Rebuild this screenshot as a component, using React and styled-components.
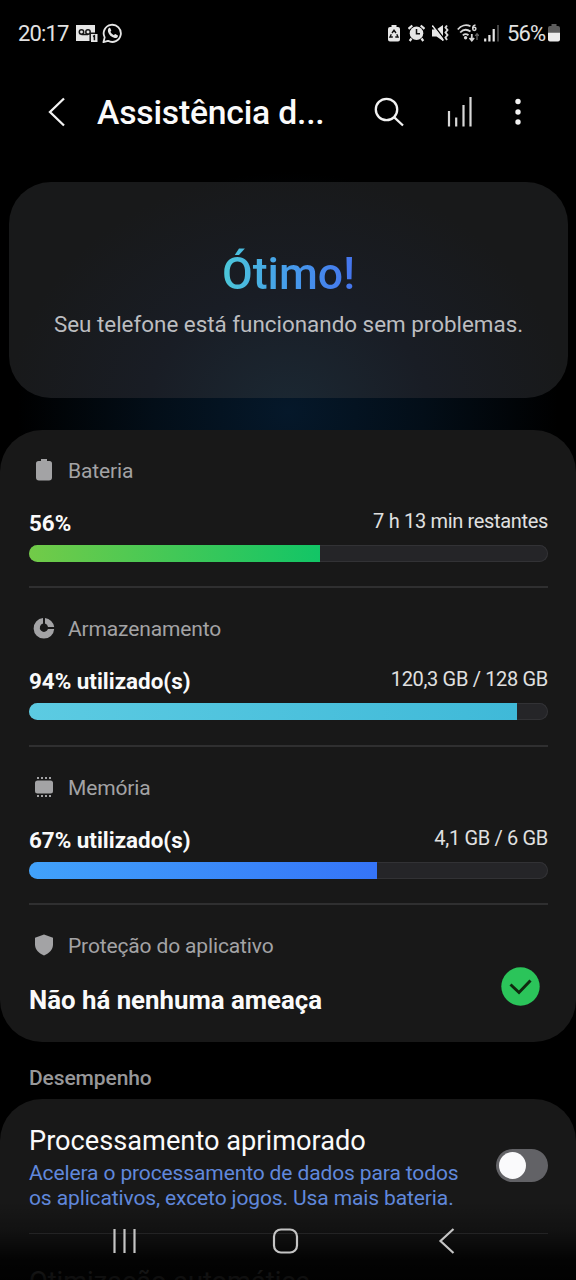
import styled, { createGlobalStyle } from "styled-components";

const GlobalStyle = createGlobalStyle`
  * {
    box-sizing: border-box;
    margin: 0;
    padding: 0;
  }

  html, body {
    background: #000;
    height: 1280px;
    overflow: hidden;
  }

  body {
    font-family: Roboto, "Liberation Sans", sans-serif;
    color: #fff;
  }
`;

const Screen = styled.main`
  position: relative;
  width: 576px;
  height: 1280px;
  overflow: hidden;
  background: radial-gradient(ellipse 270px 240px at 288px 412px, #05182a 0%, #030e18 50%, #000 100%) #000;
`;

const StatusBar = styled.header`
  display: flex;
  align-items: center;
  height: 66px;
  padding: 0 16px 0 18px;
`;

const Clock = styled.span`
  width: 58px;
  margin-top: 1px;
  font-size: 22px;
  line-height: 26px;
  letter-spacing: -0.85px;
  color: #e2e2e2;
  white-space: nowrap;
`;

const StatusIcon = styled.svg`
  flex: none;
  display: block;
  width: ${({ $w }) => $w}px;
  height: ${({ $h }) => $h || 22}px;
  margin-right: ${({ $gap }) => $gap || 0}px;
`;

const StatusRight = styled.div`
  display: flex;
  align-items: center;
  margin-left: auto;
`;

const Percent = styled.span`
  width: 41px;
  margin-top: 1px;
  font-size: 22px;
  line-height: 26px;
  letter-spacing: -0.9px;
  color: #e2e2e2;
  white-space: nowrap;
`;

const TitleBar = styled.nav`
  display: flex;
  align-items: center;
  height: 92px;
  padding: 0 31px 0 40px;
`;

const IconButton = styled.button`
  flex: none;
  display: flex;
  align-items: center;
  justify-content: center;
  width: ${({ $w }) => $w}px;
  height: 44px;
  border: 0;
  background: none;
  color: #f2f2f2;
`;

const Title = styled.h1`
  width: 263px;
  margin: 2px 0 0 23px;
  font-size: 33.7px;
  font-weight: 500;
  line-height: 44px;
  letter-spacing: -0.2px;
  color: #fafafa;
  white-space: nowrap;
`;

const Hero = styled.section`
  display: flex;
  flex-direction: column;
  align-items: center;
  width: 559px;
  height: 216px;
  margin: 24px 0 0 9px;
  padding-top: 64px;
  border-radius: 42px;
  background: radial-gradient(ellipse 280px 240px at 279px 230px, #1b2833 0%, #191d25 50%, #18191a 100%);
`;

const HeroTitle = styled.h2`
  font-size: 44.6px;
  font-weight: 500;
  line-height: 56px;
  background: linear-gradient(90deg, #4cc8d8 0%, #46a0ea 45%, #4574ee 100%);
  background-clip: text;
  color: transparent;
  white-space: nowrap;
`;

const HeroText = styled.p`
  margin-top: 8px;
  font-size: 22.4px;
  line-height: 29px;
  color: #bcbdc0;
  white-space: nowrap;
`;

const Panel = styled.section`
  height: ${({ $h }) => $h}px;
  margin-top: ${({ $gap }) => $gap}px;
  padding: 0 28px 0 29px;
  border-radius: 42px;
  background: #181818;
`;

const Section = styled.article`
  height: 158.4px;
  padding-top: 27px;
  border-bottom: ${({ $last }) => ($last ? "0" : "2px solid #2f2f30")};
`;

const SectionLabel = styled.h3`
  display: flex;
  align-items: center;
  height: 28px;
  font-size: 21px;
  font-weight: 400;
  letter-spacing: -0.14px;
  color: #a3a3a5;
  white-space: nowrap;

  svg {
    flex: none;
    width: 22px;
    height: 24px;
    margin: -2px 13px 0 4px;
  }
`;

const ValueRow = styled.div`
  display: flex;
  justify-content: space-between;
  height: 28px;
  margin: 24px 0 8px;
`;

const Value = styled.strong`
  font-size: 22.4px;
  font-weight: 700;
  line-height: 28px;
  color: #fafafa;
  white-space: nowrap;
`;

const Detail = styled.span`
  font-size: 20px;
  line-height: 24px;
  letter-spacing: -0.33px;
  color: #e0e0e0;
  white-space: nowrap;
`;

const Track = styled.div`
  height: 17px;
  border-radius: 9px;
  background: #252528;
  box-shadow: inset 0 0 0 1px #323235;
  overflow: hidden;
`;

const Fill = styled.div`
  height: 100%;
  background: linear-gradient(90deg, ${({ $from }) => $from}, ${({ $to }) => $to});
`;

const ThreatRow = styled.div`
  display: flex;
  justify-content: space-between;
  padding: 7px 8px 0 0;
`;

const Threat = styled.strong`
  margin-top: 17px;
  font-size: 25.8px;
  font-weight: 700;
  line-height: 32px;
  color: #fafafa;
  white-space: nowrap;
`;

const GroupTitle = styled.h3`
  height: 28px;
  margin: 22px 0 0 29px;
  font-size: 21px;
  font-weight: 500;
  line-height: 28px;
  letter-spacing: -0.1px;
  color: #979799;
`;

const Setting = styled.div`
  display: flex;
  align-items: flex-start;
  justify-content: space-between;
  height: 135px;
  padding-top: 26px;
  border-bottom: 1px solid #343436;
`;

const SettingTitle = styled.h4`
  font-size: 27.2px;
  font-weight: 400;
  line-height: 33px;
  color: #fafafa;
  white-space: nowrap;
`;

const SettingText = styled.p`
  margin-top: 3px;
  font-size: 21px;
  line-height: 25px;
  letter-spacing: -0.12px;
  color: #6088dc;
  white-space: nowrap;
`;

const Toggle = styled.span`
  flex: none;
  width: 52px;
  height: 33px;
  margin-top: 24px;
  padding: 3px;
  border-radius: 17px;
  background: #626266;

  &::before {
    content: "";
    display: block;
    width: 27px;
    height: 27px;
    border-radius: 50%;
    background: #fafafc;
  }
`;

const NextSetting = styled.h4`
  padding-top: 32px;
  font-size: 27.2px;
  font-weight: 400;
  line-height: 32px;
  color: #fafafa;
  white-space: nowrap;
`;

/* system navigation floats over the scrolled list */
const NavBar = styled.footer`
  position: absolute;
  left: 0;
  right: 0;
  bottom: 0;
  display: flex;
  align-items: center;
  gap: 133px;
  height: 78px;
  padding-left: 111px;
  background: linear-gradient(180deg, rgba(0, 0, 0, 0) 0%, rgba(0, 0, 0, 0.25) 35%, rgba(0, 0, 0, 0.88) 75%, rgba(0, 0, 0, 0.95) 100%);
`;

const VoicemailIcon = () => (
  <StatusIcon $w={22} $gap={4} viewBox="0 0 22 22">
    <path d="M0 3h19v9h2.500v8H15v-1H0z" fill="#e6e6e6" />
    <g fill="none" stroke="#161616" strokeWidth="1.500">
      <circle cx="5.500" cy="10" r="2.200" />
      <circle cx="12" cy="10" r="2.200" />
      <path d="M5.500 12.400H12M14.200 11v8M14 11.300h5" />
      <path d="M17 14.500l1.400-.7v4.500" />
    </g>
  </StatusIcon>
);

const WhatsappIcon = () => (
  <StatusIcon $w={21} viewBox="0 0 22 22">
    <path d="M1.500 20.600l1.300-5A9 9 0 1 1 6.300 19.200z" fill="none" stroke="#e6e6e6" strokeWidth="1.900" strokeLinejoin="round" />
    <path
      d="M7.200 5.800c.5-.5 1.200-.4 1.500.2l.9 2c.2.500 0 .8-.8 1.700.9 1.800 2 2.800 3.800 3.600.9-1.100 1.200-1.300 1.700-1l2 1c.5.300.5.700.3 1.300-.5 1.300-1.900 1.900-3.300 1.600-3.600-.9-6.200-3.600-7-6.600-.3-1.500.1-3 .9-3.800z"
      fill="#e6e6e6"
    />
  </StatusIcon>
);

const SaverIcon = () => (
  <StatusIcon $w={12} $gap={8} $h={18} viewBox="0 0 12 18">
    <path d="M3.500 1h5v2H10a2 2 0 0 1 2 2v10.500a2 2 0 0 1-2 2H2a2 2 0 0 1-2-2V5a2 2 0 0 1 2-2h1.500z" fill="#e6e6e6" />
    <path d="M4 9L6 6.300 8 9M8.800 10.300l1.200 2.700H7.300M4.800 13H2l1.300-2.700" fill="none" stroke="#111" strokeWidth="1.400" />
  </StatusIcon>
);

const AlarmIcon = () => (
  <StatusIcon $w={17} $gap={7} $h={18} viewBox="0 0 17 18">
    <circle cx="8.500" cy="9.300" r="6.800" fill="#e6e6e6" />
    <path d="M.5 4.800L4.300 1.500M16.500 4.800L12.700 1.500M3.500 14.500L1.700 17M13.500 14.500L15.300 17" stroke="#e6e6e6" strokeWidth="2.200" />
    <path d="M8.500 5V9.700H12" fill="none" stroke="#111" strokeWidth="1.500" />
  </StatusIcon>
);

const MuteIcon = () => (
  <StatusIcon $w={17} $gap={8} $h={18} viewBox="0 0 17 18">
    <path d="M0 5.500h4.500L11 1v16l-6.500-4.500H0z" fill="#e6e6e6" />
    <path d="M1.500 1L12 14.500" stroke="#000" strokeWidth="1.300" />
    <path d="M.3 1.500L11.500 16.500" stroke="#e6e6e6" strokeWidth="1.500" />
    <path d="M15 1.500l-1.500 2 2 2.500-2 2.500 2 2.500-2 2.500 1.500 2.500" fill="none" stroke="#d8d8d8" strokeWidth="1.900" />
  </StatusIcon>
);

const WifiIcon = () => (
  <StatusIcon $w={22} $gap={5} $h={20} viewBox="0 0 22 20">
    <g fill="none" stroke="#d8d8d8" strokeWidth="1.800">
      <path d="M.8 6.500C4 2.500 9 1.200 13.500 3.200" />
      <path d="M3.200 9.500C6 6.500 10 6 13.500 8.500" />
      <path d="M5.800 12.300C7.500 10.800 9.700 10.800 11.500 12.300" />
      <path d="M18.500 2c-2 .3-2.800 1.800-2.800 3.500" strokeWidth="1.500" />
      <circle cx="17.300" cy="5.800" r="1.600" strokeWidth="1.500" />
      <path d="M14.800 11v6M12.500 15l2.300 2.600 2.300-2.600" />
    </g>
    <circle cx="8.600" cy="14.800" r="1.700" fill="#d8d8d8" />
    <path d="M20 17v-6M18.200 12.800L20 10.700l1.800 2.100" fill="none" stroke="#666" strokeWidth="1.300" />
  </StatusIcon>
);

const SignalIcon = () => (
  <StatusIcon $w={15} $gap={8} $h={18} viewBox="0 0 15 18">
    <path d="M1.200 17.500v-3M5.400 17.500V11M9.700 17.500V5" stroke="#e6e6e6" strokeWidth="2.200" />
    <path d="M14 17.500V1" stroke="#555" strokeWidth="1.600" />
  </StatusIcon>
);

const BatteryIcon = () => (
  <StatusIcon $w={12} $h={18} viewBox="0 0 12 18">
    <path d="M3.500 0h5v2H10a2 2 0 0 1 2 2v5H0V4a2 2 0 0 1 2-2h1.500z" fill="#5c5c5c" />
    <path d="M0 8.800h12v6.700a2 2 0 0 1-2 2H2a2 2 0 0 1-2-2z" fill="#ececec" />
  </StatusIcon>
);

const sections = [
  {
    name: "Bateria",
    value: "56%",
    detail: "7 h 13 min restantes",
    amount: 56,
    from: "#72cb48",
    to: "#12c566",
    icon: <path d="M8 1h6v2h2.500A2.500 2.500 0 0 1 19 5.500v14a3 3 0 0 1-3 3H6a3 3 0 0 1-3-3v-14A2.500 2.500 0 0 1 5.500 3H8z" />,
  },
  {
    name: "Armazenamento",
    value: "94% utilizado(s)",
    detail: "120,3 GB / 128 GB",
    amount: 94,
    from: "#5ccbe2",
    to: "#3fb9d8",
    icon: (
      <path d="M10 2.050V7.600A4.200 4.200 0 1 0 15 13H21.200A10.300 10.300 0 1 1 10 2.050zM12 2.050A10.300 10.300 0 0 1 21.200 11H15A4.200 4.200 0 0 0 12 7.600z" />
    ),
  },
  {
    name: "Memória",
    value: "67% utilizado(s)",
    detail: "4,1 GB / 6 GB",
    amount: 67,
    from: "#41a2fb",
    to: "#3574f8",
    icon: (
      <>
        <rect x="2" y="5.500" width="18" height="13" rx="2.500" />
        <path d="M4 2h2v2H4zM8 2h2v2H8zM12 2h2v2h-2zM16 2h2v2h-2zM4 20h2v2H4zM8 20h2v2H8zM12 20h2v2h-2zM16 20h2v2h-2z" />
      </>
    ),
  },
];

const App = () => {
  return (
    <>
      <GlobalStyle />
      <Screen>
        <StatusBar>
          <Clock>20:17</Clock>
          <VoicemailIcon />
          <WhatsappIcon />
          <StatusRight>
            <SaverIcon />
            <AlarmIcon />
            <MuteIcon />
            <WifiIcon />
            <SignalIcon />
            <Percent>56%</Percent>
            <BatteryIcon />
          </StatusRight>
        </StatusBar>

        <TitleBar>
          <IconButton $w={34} aria-label="Voltar">
            <svg width="20" height="32" viewBox="0 0 20 32" fill="none" stroke="currentColor" strokeWidth="2.300">
              <path d="M17 2.500L3 16l14 13.500" />
            </svg>
          </IconButton>
          <Title>Assistência d...</Title>
          <IconButton $w={76} aria-label="Pesquisar">
            <svg width="32" height="32" viewBox="0 0 32 32" fill="none" stroke="currentColor" strokeWidth="2.300">
              <circle cx="13.500" cy="13.500" r="10.700" />
              <path d="M21.300 21.300L30 29.500" />
            </svg>
          </IconButton>
          <IconButton $w={64} aria-label="Uso">
            <svg width="28" height="32" viewBox="0 0 28 32" stroke="#d8d8d8" strokeWidth="2.200">
              <path d="M4 15v15.500M11.200 21.500v9M18.500 9v21.500M25.500 1v29.500" />
            </svg>
          </IconButton>
          <IconButton $w={54} aria-label="Mais opções">
            <svg width="8" height="28" viewBox="0 0 8 28" fill="currentColor">
              <circle cx="4" cy="3.500" r="2.700" />
              <circle cx="4" cy="14" r="2.700" />
              <circle cx="4" cy="24" r="2.700" />
            </svg>
          </IconButton>
        </TitleBar>

        <Hero>
          <HeroTitle>Ótimo!</HeroTitle>
          <HeroText>Seu telefone está funcionando sem problemas.</HeroText>
        </Hero>

        <Panel $h={612} $gap={32}>
          {sections.map((s) => (
            <Section key={s.name}>
              <SectionLabel>
                <svg viewBox="0 0 22 24" fill="currentColor">{s.icon}</svg>
                {s.name}
              </SectionLabel>
              <ValueRow>
                <Value>{s.value}</Value>
                <Detail>{s.detail}</Detail>
              </ValueRow>
              <Track>
                <Fill $from={s.from} $to={s.to} style={{ width: `${s.amount}%` }} />
              </Track>
            </Section>
          ))}
          <Section $last>
            <SectionLabel>
              <svg viewBox="0 0 22 24" fill="currentColor">
                <path d="M11 1.500l9 3.200v6.800c0 4.800-3.500 8.700-9 11-5.500-2.300-9-6.200-9-11V4.700z" />
              </svg>
              Proteção do aplicativo
            </SectionLabel>
            <ThreatRow>
              <Threat>Não há nenhuma ameaça</Threat>
              <svg width="39" height="39" viewBox="0 0 39 39">
                <circle cx="19.500" cy="19.500" r="19.200" fill="#2bc45a" />
                <path d="M9.500 17.500l8.500 8 11.500-12" fill="none" stroke="#10290f" strokeWidth="3" />
              </svg>
            </ThreatRow>
          </Section>
        </Panel>

        <GroupTitle>Desempenho</GroupTitle>

        <Panel $h={260} $gap={7}>
          <Setting>
            <div>
              <SettingTitle>Processamento aprimorado</SettingTitle>
              <SettingText>
                Acelera o processamento de dados para todos
                <br />
                os aplicativos, exceto jogos. Usa mais bateria.
              </SettingText>
            </div>
            <Toggle />
          </Setting>
          <NextSetting>Otimização automática</NextSetting>
        </Panel>

        <NavBar>
          <svg width="28" height="28" viewBox="0 0 28 28" stroke="#c4c4c4" strokeWidth="2.200">
            <path d="M3.500 2v24M13.500 2v24M23.500 2v24" />
          </svg>
          <svg width="28" height="28" viewBox="0 0 28 28" fill="none" stroke="#c4c4c4" strokeWidth="2.200">
            <rect x="2" y="2.500" width="23" height="23" rx="7" />
          </svg>
          <svg width="28" height="28" viewBox="0 0 28 28" fill="none" stroke="#c4c4c4" strokeWidth="2.200">
            <path d="M20.500 2L7.500 14l13 12" />
          </svg>
        </NavBar>
      </Screen>
    </>
  );
};

export default App;
